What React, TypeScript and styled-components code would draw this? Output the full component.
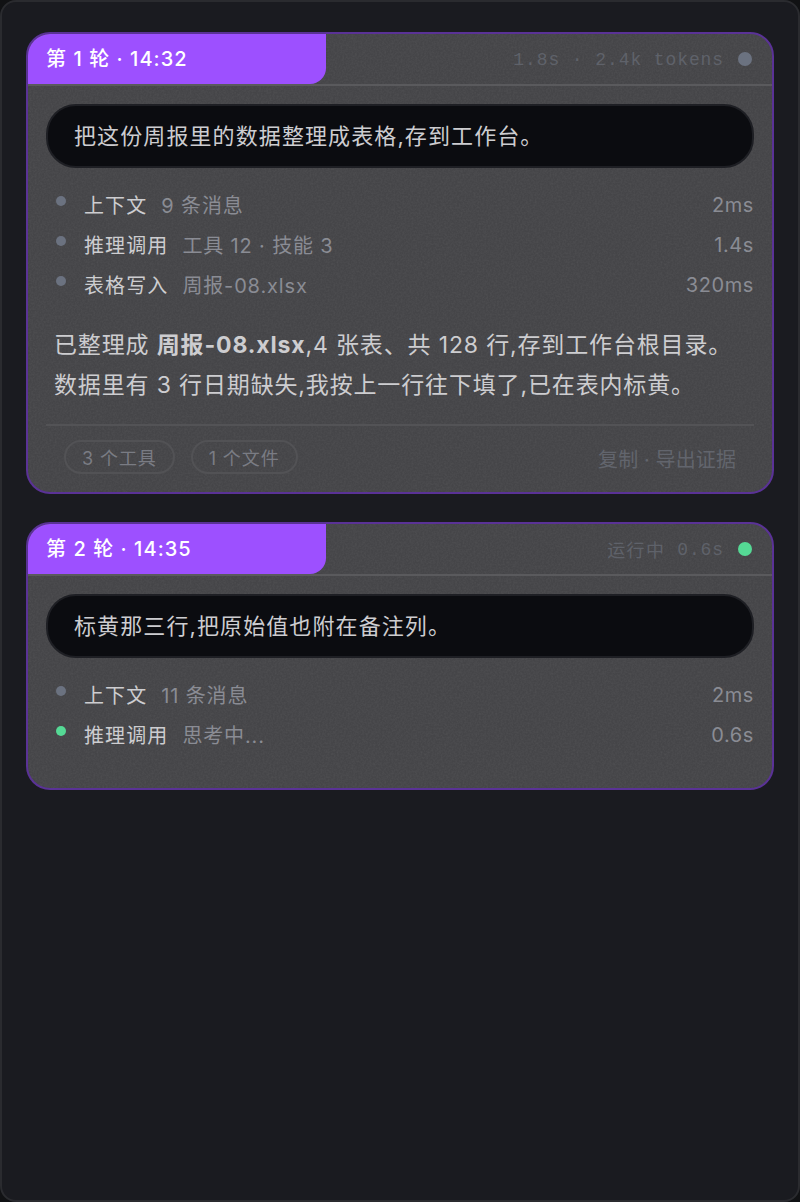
import styled, { createGlobalStyle } from "styled-components"

const noise = `url("data:image/svg+xml,%3Csvg xmlns='http://www.w3.org/2000/svg' width='240' height='240'%3E%3Cfilter id='n'%3E%3CfeTurbulence type='fractalNoise' baseFrequency='0.55' numOctaves='2' stitchTiles='stitch'/%3E%3CfeColorMatrix values='0 0 0 0 1 0 0 0 0 1 0 0 0 0 1 0 0 0 0.5 -0.17'/%3E%3C/filter%3E%3Crect width='240' height='240' filter='url(%23n)' opacity='0.16'/%3E%3C/svg%3E")`

const GlobalStyle = createGlobalStyle`
  html, body {
    margin: 0;
    background: #111214;
  }
  * {
    box-sizing: border-box;
  }
`

const Frame = styled.div`
  width: 800px;
  height: 1202px;
  padding: 30px 24px;
  display: flex;
  flex-direction: column;
  gap: 28px;
  background: #1a1b20;
  border: 2px solid #2a2b2f;
  border-radius: 16px;
  font-family: Inter, "Noto Sans CJK SC", sans-serif;
`

const Card = styled.section`
  border: 2px solid #5a3296;
  border-radius: 24px;
  background-color: #454548;
  background-image: ${noise};
  overflow: hidden;
`

const Header = styled.header`
  height: 52px;
  display: flex;
  align-items: flex-start;
  justify-content: space-between;
  border-bottom: 2px solid #5a5a5d;
`

const Tab = styled.div`
  width: 298px;
  height: 50px;
  padding: 0 0 3px 18px;
  display: flex;
  align-items: center;
  background: #9d50ff;
  border-bottom-right-radius: 16px;
  color: #fff;
  font-size: 20px;
  font-weight: 500;
  letter-spacing: 1.05px;
`

const Meta = styled.div`
  height: 50px;
  padding-right: 20px;
  display: flex;
  align-items: center;
  color: #5f626a;
  font-size: 18px;
`

const Mono = styled.span`
  padding-top: 2px;
  font-family: "Liberation Mono", monospace;
  font-size: 18px;
  letter-spacing: 0.9px;
`

const Status = styled.span`
  margin-right: 12px;
  letter-spacing: 1.3px;
`

const Dot = styled.span<{ $live?: boolean }>`
  flex: none;
  border-radius: 50%;
  background: ${({ $live }) => ($live ? "#55d995" : "#6b7280")};
`

const MetaDot = styled(Dot)`
  width: 14px;
  height: 14px;
  margin-left: 14px;
`

const Body = styled.div<{ $tail?: number }>`
  padding: 18px 18px ${({ $tail }) => $tail ?? 0}px;
`

const Bubble = styled.div`
  height: 64px;
  padding: 0 26px 5px;
  display: flex;
  align-items: center;
  background: #0b0c10;
  border: 2px solid #1e1f24;
  border-radius: 30px;
  color: #cdcdd0;
  font-size: 22px;
  letter-spacing: 1.1px;
`

const Steps = styled.ul`
  margin: 16px 0 0;
  padding: 0;
  list-style: none;
`

const Step = styled.li`
  height: 40px;
  padding-left: 10px;
  display: flex;
  align-items: center;
  font-size: 20px;
`

const StepDot = styled(Dot)`
  width: 10px;
  height: 10px;
  margin: -6px 18px 0 0;
`

const StepLabel = styled.span`
  color: #cdcdd0;
  letter-spacing: 1.1px;
`

const StepDetail = styled.span`
  margin-left: 14px;
  color: #8a8c94;
  letter-spacing: 0.85px;
`

const StepTime = styled.span`
  margin-left: auto;
  padding-top: 2px;
  color: #8a8c94;
  letter-spacing: 0.6px;
`

const Reply = styled.p`
  margin: 21px 0 0;
  padding: 0 8px;
  color: #cdcdd0;
  font-size: 23px;
  line-height: 40px;
  letter-spacing: 0.85px;

  strong {
    font-weight: 700;
  }
`

const Footer = styled.footer`
  height: 68px;
  margin: 19px 18px 0;
  padding: 14px 18px 0;
  display: flex;
  align-items: flex-start;
  gap: 16px;
  border-top: 2px solid #535356;
`

const Chip = styled.span`
  height: 34px;
  padding: 0 16px;
  display: flex;
  align-items: center;
  border: 2px solid #525255;
  border-radius: 17px;
  color: #7a7c84;
  font-size: 18px;
  letter-spacing: 0.9px;
`

const Actions = styled.span`
  margin-left: auto;
  line-height: 40px;
  color: #62656d;
  font-size: 20px;
  letter-spacing: 0.1px;
`

type StepData = {
  label: string;
  detail: string;
  time: string;
  live?: boolean;
}

const firstSteps: StepData[] = [
  { label: "上下文", detail: "9 条消息", time: "2ms" },
  { label: "推理调用", detail: "工具 12 · 技能 3", time: "1.4s" },
  { label: "表格写入", detail: "周报-08.xlsx", time: "320ms" },
]

const secondSteps: StepData[] = [
  { label: "上下文", detail: "11 条消息", time: "2ms" },
  { label: "推理调用", detail: "思考中...", time: "0.6s", live: true },
]

const StepList = ({ steps }: { steps: StepData[] }) => (
  <Steps>
    {steps.map((step) => (
      <Step key={step.label}>
        <StepDot $live={step.live} />
        <StepLabel>{step.label}</StepLabel>
        <StepDetail>{step.detail}</StepDetail>
        <StepTime>{step.time}</StepTime>
      </Step>
    ))}
  </Steps>
)

export default function App() {
  return (
    <>
      <GlobalStyle />
      <Frame>
        <Card>
          <Header>
            <Tab>第 1 轮 · 14:32</Tab>
            <Meta>
              <Mono>1.8s · 2.4k tokens</Mono>
              <MetaDot />
            </Meta>
          </Header>
          <Body>
            <Bubble>把这份周报里的数据整理成表格,存到工作台。</Bubble>
            <StepList steps={firstSteps} />
            <Reply>
              已整理成 <strong>周报-08.xlsx</strong>,4 张表、共 128 行,存到工作台根目录。
              <br />
              数据里有 3 行日期缺失,我按上一行往下填了,已在表内标黄。
            </Reply>
          </Body>
          <Footer>
            <Chip>3 个工具</Chip>
            <Chip>1 个文件</Chip>
            <Actions>复制 · 导出证据</Actions>
          </Footer>
        </Card>
        <Card>
          <Header>
            <Tab>第 2 轮 · 14:35</Tab>
            <Meta>
              <Status>运行中</Status>
              <Mono>0.6s</Mono>
              <MetaDot $live />
            </Meta>
          </Header>
          <Body $tail={34}>
            <Bubble>标黄那三行,把原始值也附在备注列。</Bubble>
            <StepList steps={secondSteps} />
          </Body>
        </Card>
      </Frame>
    </>
  )
}
